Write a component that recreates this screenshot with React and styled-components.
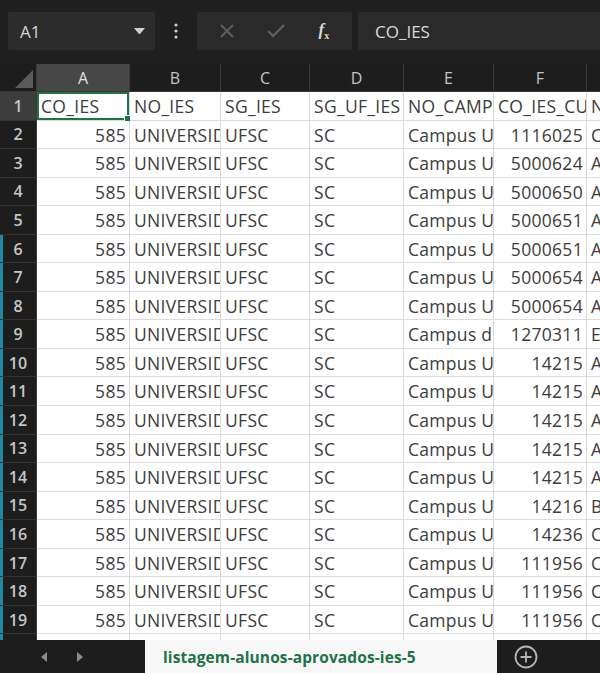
import React from "react";
import styled, { createGlobalStyle } from "styled-components";

const GlobalStyle = createGlobalStyle`
    html, body {
        margin:0;
        padding:0;
        background:#1f1f1f;
    }
    * {
        box-sizing:border-box;
    }
`

const Screen = styled.div`
    width:600px;
    height:673px;
    display:flex;
    flex-direction:column;
    overflow:hidden;
    background:#1f1f1f;
    font-family:"Open Sans", "Liberation Sans", sans-serif;
`

const Toolbar = styled.div`
    height:64px;
    flex:none;
    display:flex;
    align-items:flex-start;
    padding:12px 0 0 8px;
`

const NameBox = styled.div`
    width:147px;
    height:38px;
    background:#2c2c2c;
    border-radius:2px;
    display:flex;
    align-items:center;
    justify-content:space-between;
    padding:0 10px 0 12px;
    color:#d6d6d6;
    font-size:17px;
`

const DotsWrap = styled.div`
    width:42px;
    height:38px;
    display:flex;
    align-items:center;
    justify-content:center;
`

const ButtonGroup = styled.div`
    width:155px;
    height:38px;
    background:#2a2a2a;
    border-radius:2px;
    display:flex;
    align-items:center;
    justify-content:space-around;
    padding:0 6px;
`

const FxLabel = styled.span`
    font-family:"Liberation Serif", serif;
    font-style:italic;
    font-weight:bold;
    color:#d8d8d8;
    font-size:17px;

    sub {
        font-size:10px;
        font-style:normal;
    }
`

const FormulaInput = styled.div`
    flex:1;
    height:38px;
    margin-left:6px;
    background:#2a2a2a;
    display:flex;
    align-items:center;
    padding-left:17px;
    color:#dadada;
    font-size:17px;
`

const Sheet = styled.div`
    flex:1;
    overflow:hidden;
    display:grid;
    grid-template-columns:37px 93px 91px 89px 94px 90px 93px 80px;
    grid-template-rows:28px;
    grid-auto-rows:28.55px;
    align-content:start;
`

const Corner = styled.div`
    background:#1d1d1d;
    border-right:1px solid #3a3a3a;
    border-bottom:1px solid #3a3a3a;
    display:flex;
    align-items:flex-end;
    justify-content:flex-end;
    padding:0 3px 3px 0;
`

const ColHeader = styled.div`
    background:${p => p.$active ? "#474747" : "#1d1d1d"};
    color:${p => p.$active ? "#e0e0e0" : "#c4c4c4"};
    border-right:1px solid #3a3a3a;
    border-bottom:1px solid #3a3a3a;
    display:flex;
    align-items:center;
    justify-content:center;
    font-size:16px;
`

const RowHeader = styled.div`
    background:${p => p.$active ? "#3d3d3d" : "#1d1d1d"};
    color:#c6c6c6;
    border-bottom:1px solid #333;
    border-right:1px solid #3a3a3a;
    box-shadow:${p => p.$edge ? "inset 3px 0 0 #1e8aa6" : "none"};
    display:flex;
    align-items:center;
    justify-content:center;
    font-size:16px;
    font-weight:600;
`

const Cell = styled.div`
    position:relative;
    background:#ffffff;
    border-right:1px solid #d9d9d9;
    border-bottom:1px solid #dcdcdc;
    color:#3c3c3c;
    font-size:17.5px;
    letter-spacing:0.3px;
    line-height:28px;
    padding:0 3px 0 4px;
    white-space:nowrap;
    overflow:${p => p.$selected ? "visible" : "hidden"};
    text-align:${p => p.$num ? "right" : "left"};
    box-shadow:${p => p.$selected ? "inset 0 0 0 2px #217346" : "none"};

    &::after {
        content:"";
        display:${p => p.$selected ? "block" : "none"};
        position:absolute;
        right:-4px;
        bottom:-4px;
        width:7px;
        height:7px;
        background:#217346;
        border:1px solid #fff;
    }
`

const TabBar = styled.div`
    height:33px;
    flex:none;
    display:flex;
    background:#f8f8f8;
`

const TabNav = styled.div`
    width:145px;
    background:#1d1d1d;
    display:flex;
    align-items:center;
    gap:30px;
    padding-left:41px;
`

const SheetTab = styled.div`
    width:352px;
    display:flex;
    align-items:center;
    padding-left:18px;
    color:#217346;
    font-weight:bold;
    font-size:15.5px;
    letter-spacing:0.1px;
`

const AddArea = styled.div`
    flex:1;
    background:#1d1d1d;
    display:flex;
    align-items:center;
    padding-left:17px;
`

const columns = ["A", "B", "C", "D", "E", "F", "G"];

const codes = [
    ["1116025", "C", "Campus U"],
    ["5000624", "A", "Campus U"],
    ["5000650", "A", "Campus U"],
    ["5000651", "A", "Campus U"],
    ["5000651", "A", "Campus U"],
    ["5000654", "A", "Campus U"],
    ["5000654", "A", "Campus U"],
    ["1270311", "E", "Campus d"],
    ["14215", "A", "Campus U"],
    ["14215", "A", "Campus U"],
    ["14215", "A", "Campus U"],
    ["14215", "A", "Campus U"],
    ["14215", "A", "Campus U"],
    ["14216", "B", "Campus U"],
    ["14236", "C", "Campus U"],
    ["111956", "C", "Campus U"],
    ["111956", "C", "Campus U"],
    ["111956", "C", "Campus U"],
];

const header = ["CO_IES", "NO_IES", "SG_IES", "SG_UF_IES", "NO_CAMPUS", "CO_IES_CURSO", "NO_CURSO"];

const Triangle = ({ dir, color, size }) => {
    const pts = {
        down: "0,0 10,0 5,6",
        left: "6,0 6,10 0,5",
        right: "0,0 0,10 6,5",
    }[dir];
    const vb = dir === "down" ? "0 0 10 6" : "0 0 6 10";
    const w = dir === "down" ? size : size * 0.6;
    const h = dir === "down" ? size * 0.6 : size;
    return (
        <svg width={w} height={h} viewBox={vb}>
            <polygon points={pts} fill={color} />
        </svg>
    );
}

const App = () => {
    return (
        <Screen>
            <GlobalStyle />
            <Toolbar>
                <NameBox>
                    <span>A1</span>
                    <Triangle dir="down" color="#cfcfcf" size={11} />
                </NameBox>
                <DotsWrap>
                    <svg width="4" height="16" viewBox="0 0 4 16">
                        <circle cx="2" cy="2" r="1.6" fill="#cfcfcf" />
                        <circle cx="2" cy="8" r="1.6" fill="#cfcfcf" />
                        <circle cx="2" cy="14" r="1.6" fill="#cfcfcf" />
                    </svg>
                </DotsWrap>
                <ButtonGroup>
                    <svg width="14" height="14" viewBox="0 0 14 14">
                        <path d="M1 1 L13 13 M13 1 L1 13" stroke="#5e5e5e" strokeWidth="2" />
                    </svg>
                    <svg width="18" height="14" viewBox="0 0 18 14">
                        <path d="M1 7 L6 12 L17 1" stroke="#5e5e5e" strokeWidth="2.4" fill="none" />
                    </svg>
                    <FxLabel>f<sub>x</sub></FxLabel>
                </ButtonGroup>
                <FormulaInput>CO_IES</FormulaInput>
            </Toolbar>

            <Sheet>
                <Corner>
                    <svg width="18" height="18" viewBox="0 0 18 18">
                        <polygon points="18,0 18,18 0,18" fill="#5a5a5a" />
                    </svg>
                </Corner>
                {columns.map(c => (
                    <ColHeader key={c} $active={c === "A"}>{c}</ColHeader>
                ))}

                <RowHeader $active>1</RowHeader>
                {header.map((h, i) => (
                    <Cell key={i} $selected={i === 0}>{h}</Cell>
                ))}

                {codes.map((r, i) => (
                    <React.Fragment key={i}>
                        <RowHeader $edge={i >= 4}>{i + 2}</RowHeader>
                        <Cell $num>585</Cell>
                        <Cell>UNIVERSIDADE FEDERAL DE SANTA CATARINA</Cell>
                        <Cell>UFSC</Cell>
                        <Cell>SC</Cell>
                        <Cell>{r[2]}</Cell>
                        <Cell $num>{r[0]}</Cell>
                        <Cell>{r[1]}</Cell>
                    </React.Fragment>
                ))}

                <RowHeader $edge>20</RowHeader>
                {columns.map(c => <Cell key={c}></Cell>)}
            </Sheet>

            <TabBar>
                <TabNav>
                    <Triangle dir="left" color="#8a8a8a" size={10} />
                    <Triangle dir="right" color="#8a8a8a" size={10} />
                </TabNav>
                <SheetTab>listagem-alunos-aprovados-ies-5</SheetTab>
                <AddArea>
                    <svg width="24" height="24" viewBox="0 0 24 24">
                        <circle cx="12" cy="12" r="10.5" stroke="#b5b5b5" strokeWidth="1.8" fill="none" />
                        <path d="M12 6.5 V17.5 M6.5 12 H17.5" stroke="#b5b5b5" strokeWidth="1.8" />
                    </svg>
                </AddArea>
            </TabBar>
        </Screen>
    );
}

export default App;
